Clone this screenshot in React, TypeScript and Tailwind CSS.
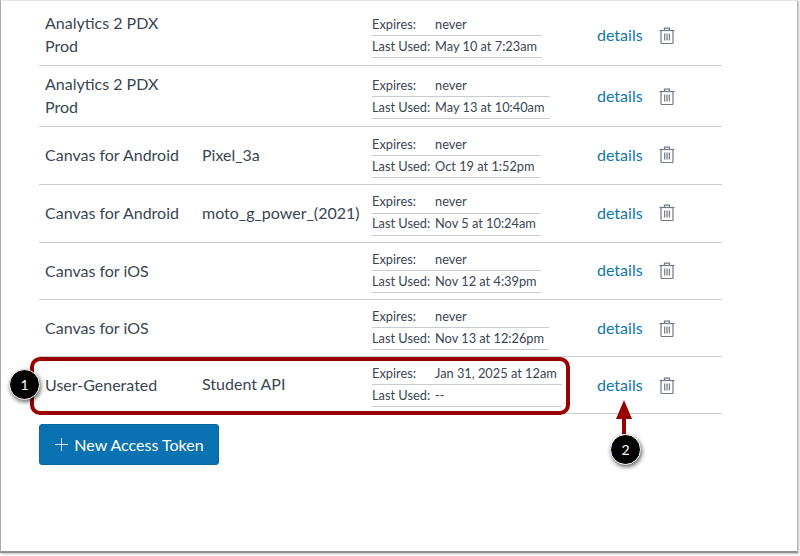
const rows = [
  { name: ["Analytics 2 PDX", "Prod"], device: "", expires: "never", used: "May 10 at 7:23am", h: "h-[61px]", w: "w-[170px]", up: "", down: "mt-[2px]" },
  { name: ["Analytics 2 PDX", "Prod"], device: "", expires: "never", used: "May 13 at 10:40am", h: "h-[61px]", w: "w-[178px]", up: "", down: "mt-[2px]" },
  { name: ["Canvas for Android"], device: "Pixel_3a", expires: "never", used: "Oct 19 at 1:52pm", h: "h-[58px]", w: "w-[168px]", up: "mb-[2px]", down: "mt-[1px]" },
  { name: ["Canvas for Android"], device: "moto_g_power_(2021)", expires: "never", used: "Nov 5 at 10:24am", h: "h-[58px]", w: "w-[168px]", up: "mb-[2px]", down: "" },
  { name: ["Canvas for iOS"], device: "", expires: "never", used: "Nov 12 at 4:39pm", h: "h-[57px]", w: "w-[169px]", up: "mb-[2px]", down: "" },
  { name: ["Canvas for iOS"], device: "", expires: "never", used: "Nov 13 at 12:26pm", h: "h-[57px]", w: "w-[177px]", up: "", down: "" },
  { name: ["User-Generated"], device: "Student API", expires: "Jan 31, 2025 at 12am", used: "--", h: "h-[57px]", w: "w-[190px]", up: "", down: "" },
];

function TrashIcon() {
  return (
    <svg width="16" height="17" viewBox="0 0 16 17" fill="none" stroke="#6f7a84" strokeWidth="1.2">
      <path d="M0.5 3.5h15" />
      <path d="M5.5 3.5V1.2h5v2.3" />
      <path d="M2 3.5v12.2a.8.8 0 0 0 .8.8h10.4a.8.8 0 0 0 .8-.8V3.5" />
      <path d="M5.7 6.5v7M8 6.5v7M10.3 6.5v7" />
    </svg>
  );
}

function Marker({ n, className }: { n: number; className: string }) {
  return (
    <div className={`absolute flex h-[31px] w-[31px] items-center justify-center rounded-full border border-white bg-black text-[14px] text-white shadow-[1px_2px_4px_rgba(0,0,0,0.6)] ${className}`}>
      {n}
    </div>
  );
}

export default function App() {
  return (
    <div className="relative h-[556px] w-[800px] overflow-hidden bg-white font-['Lato','Inter',sans-serif] text-[16px] text-[#394651]">
      <div className="h-[553px] w-[798px] border-t border-l border-r border-b-2 border-t-[#e4e4e4] border-l-[#a8a8a8] border-r-[#b5b5b5] border-b-[#8f8f8f] pl-[38px] pt-[4px] shadow-[1px_1px_2px_rgba(0,0,0,0.25)]">
        <div className="w-[683px]">
          {rows.map((row, i) => (
            <div key={i} className={`flex items-center border-b border-[#c7cdd1] ${row.h}`}>
              <div className="mb-[2px] w-[157px] pl-[6px] leading-[23px]">
                {row.name.map((line) => (
                  <div key={line}>{line}</div>
                ))}
              </div>
              <div className="mb-[2px] w-[176px] pl-[6px] whitespace-nowrap">{row.device}</div>
              <div className="w-[225px] shrink-0">
                <div className={`text-[12.8px] ${row.w} ${row.down}`}>
                  <div className="flex h-[22px] items-center border-b border-[#c7cdd1]">
                    <span className="w-[63px]">Expires:</span>
                    <span>{row.expires}</span>
                  </div>
                  <div className="flex h-[22px] items-center border-b border-[#c7cdd1]">
                    <span className="w-[63px]">Last Used:</span>
                    <span>{row.used}</span>
                  </div>
                </div>
              </div>
              <a className={`w-[62px] text-[#1077ad] ${row.up}`}>details</a>
              <div className={`flex items-center ${row.up}`}>
                <TrashIcon />
              </div>
            </div>
          ))}
          <button className="mt-[10px] flex h-[41px] w-[180px] items-center justify-center gap-[6px] rounded-[3px] border border-[#0668a0] bg-[#0a72b0] pl-[1px] text-white">
            <svg width="13" height="13" viewBox="0 0 13 13" stroke="#d5e6ef" strokeWidth="1">
              <path d="M6.5 0v13M0 6.5h13" />
            </svg>
            New Access Token
          </button>
        </div>
      </div>

      {/* callouts */}
      <div className="absolute left-[30px] top-[357px] h-[58px] w-[540px] rounded-[10px] border-[4px] border-[#990000]" />
      <Marker n={1} className="left-[9px] top-[369px]" />
      <div className="absolute left-[622px] top-[418px] h-[16px] w-[4px] bg-[#990000]" />
      <div className="absolute left-[616px] top-[400px] h-0 w-0 border-x-[8px] border-b-[19px] border-x-transparent border-b-[#990000]" />
      <Marker n={2} className="left-[610px] top-[434px]" />
    </div>
  );
}
